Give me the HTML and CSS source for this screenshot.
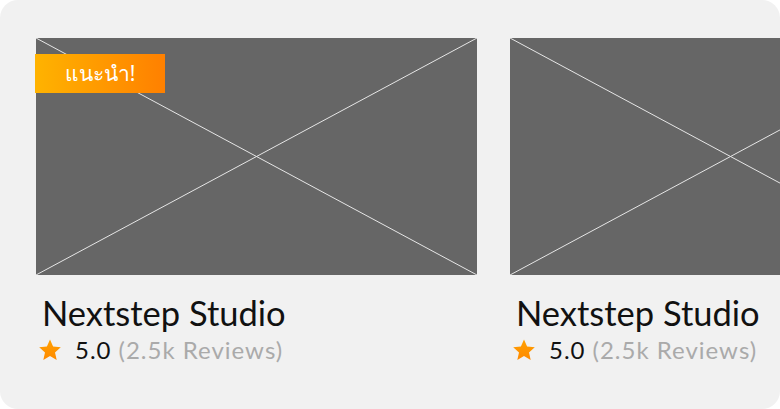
FILE: index.html
```html
<!DOCTYPE html>
<html lang="th">
<head>
<meta charset="utf-8">
<link rel="stylesheet" href="styles.css">
</head>
<body>
<div class="panel">
  <div class="row">
    <div class="card">
      <div class="thumb">
        <svg class="x" viewBox="0 0 441 237" preserveAspectRatio="none"><line x1="0" y1="0" x2="441" y2="237"/><line x1="0" y1="237" x2="441" y2="0"/></svg>
        <span class="badge">แนะนำ!</span>
      </div>
      <div class="title">Nextstep Studio</div>
      <div class="rating">
        <svg class="star" viewBox="0 0 24 24"><defs><linearGradient id="g1" x1="0" y1="0" x2="0" y2="1"><stop offset="0" stop-color="#ffa000"/><stop offset="1" stop-color="#ff8a00"/></linearGradient></defs><polygon fill="url(#g1)" points="12,1.5 15.1,8.6 22.8,9.3 17,14.4 18.7,22 12,18 5.3,22 7,14.4 1.2,9.3 8.9,8.6"/></svg>
        <span class="score">5.0</span>
        <span class="reviews">(2.5k Reviews)</span>
      </div>
    </div>
    <div class="card">
      <div class="thumb">
        <svg class="x" viewBox="0 0 441 237" preserveAspectRatio="none"><line x1="0" y1="0" x2="441" y2="237"/><line x1="0" y1="237" x2="441" y2="0"/></svg>
      </div>
      <div class="title">Nextstep Studio</div>
      <div class="rating">
        <svg class="star" viewBox="0 0 24 24"><polygon fill="url(#g1)" points="12,1.5 15.1,8.6 22.8,9.3 17,14.4 18.7,22 12,18 5.3,22 7,14.4 1.2,9.3 8.9,8.6"/></svg>
        <span class="score">5.0</span>
        <span class="reviews">(2.5k Reviews)</span>
      </div>
    </div>
  </div>
</div>
</body>
</html>
```
FILE: styles.css
```css
html, body {
  margin: 0;
  padding: 0;
  background: #ffffff;
}
.panel {
  width: 780px;
  height: 409px;
  box-sizing: border-box;
  background: #f1f1f1;
  border-radius: 18px;
  overflow: hidden;
  padding: 38px 0 0 36px;
  font-family: Lato, "Noto Sans", sans-serif;
}
.row {
  display: flex;
  gap: 33px;
}
.card {
  flex: 0 0 441px;
  width: 441px;
}
.thumb {
  position: relative;
  width: 441px;
  height: 237px;
  background: #666666;
}
.x {
  display: block;
  width: 100%;
  height: 100%;
}
.x line {
  stroke: #e6e6e6;
  stroke-width: 1;
}
.badge {
  position: absolute;
  top: 16px;
  left: -1px;
  width: 130px;
  height: 39px;
  background: linear-gradient(90deg, #ffb300, #ff8000);
  color: #ffffff;
  font-size: 21px;
  line-height: 39px;
  text-align: center;
  font-family: "Noto Sans", Lato, sans-serif;
}
.title {
  margin: 18px 0 0 6px;
  font-size: 34.5px;
  line-height: 40px;
  color: #111111;
  white-space: nowrap;
}
.rating {
  display: flex;
  align-items: center;
  margin: 3px 0 0 2px;
  font-size: 24px;
  letter-spacing: 1px;
  line-height: 28px;
  white-space: nowrap;
}
.star {
  width: 24px;
  height: 24px;
  margin-right: 13px;
}
.score {
  color: #111111;
  margin-right: 7px;
}
.reviews {
  color: #aaaaaa;
}
```
